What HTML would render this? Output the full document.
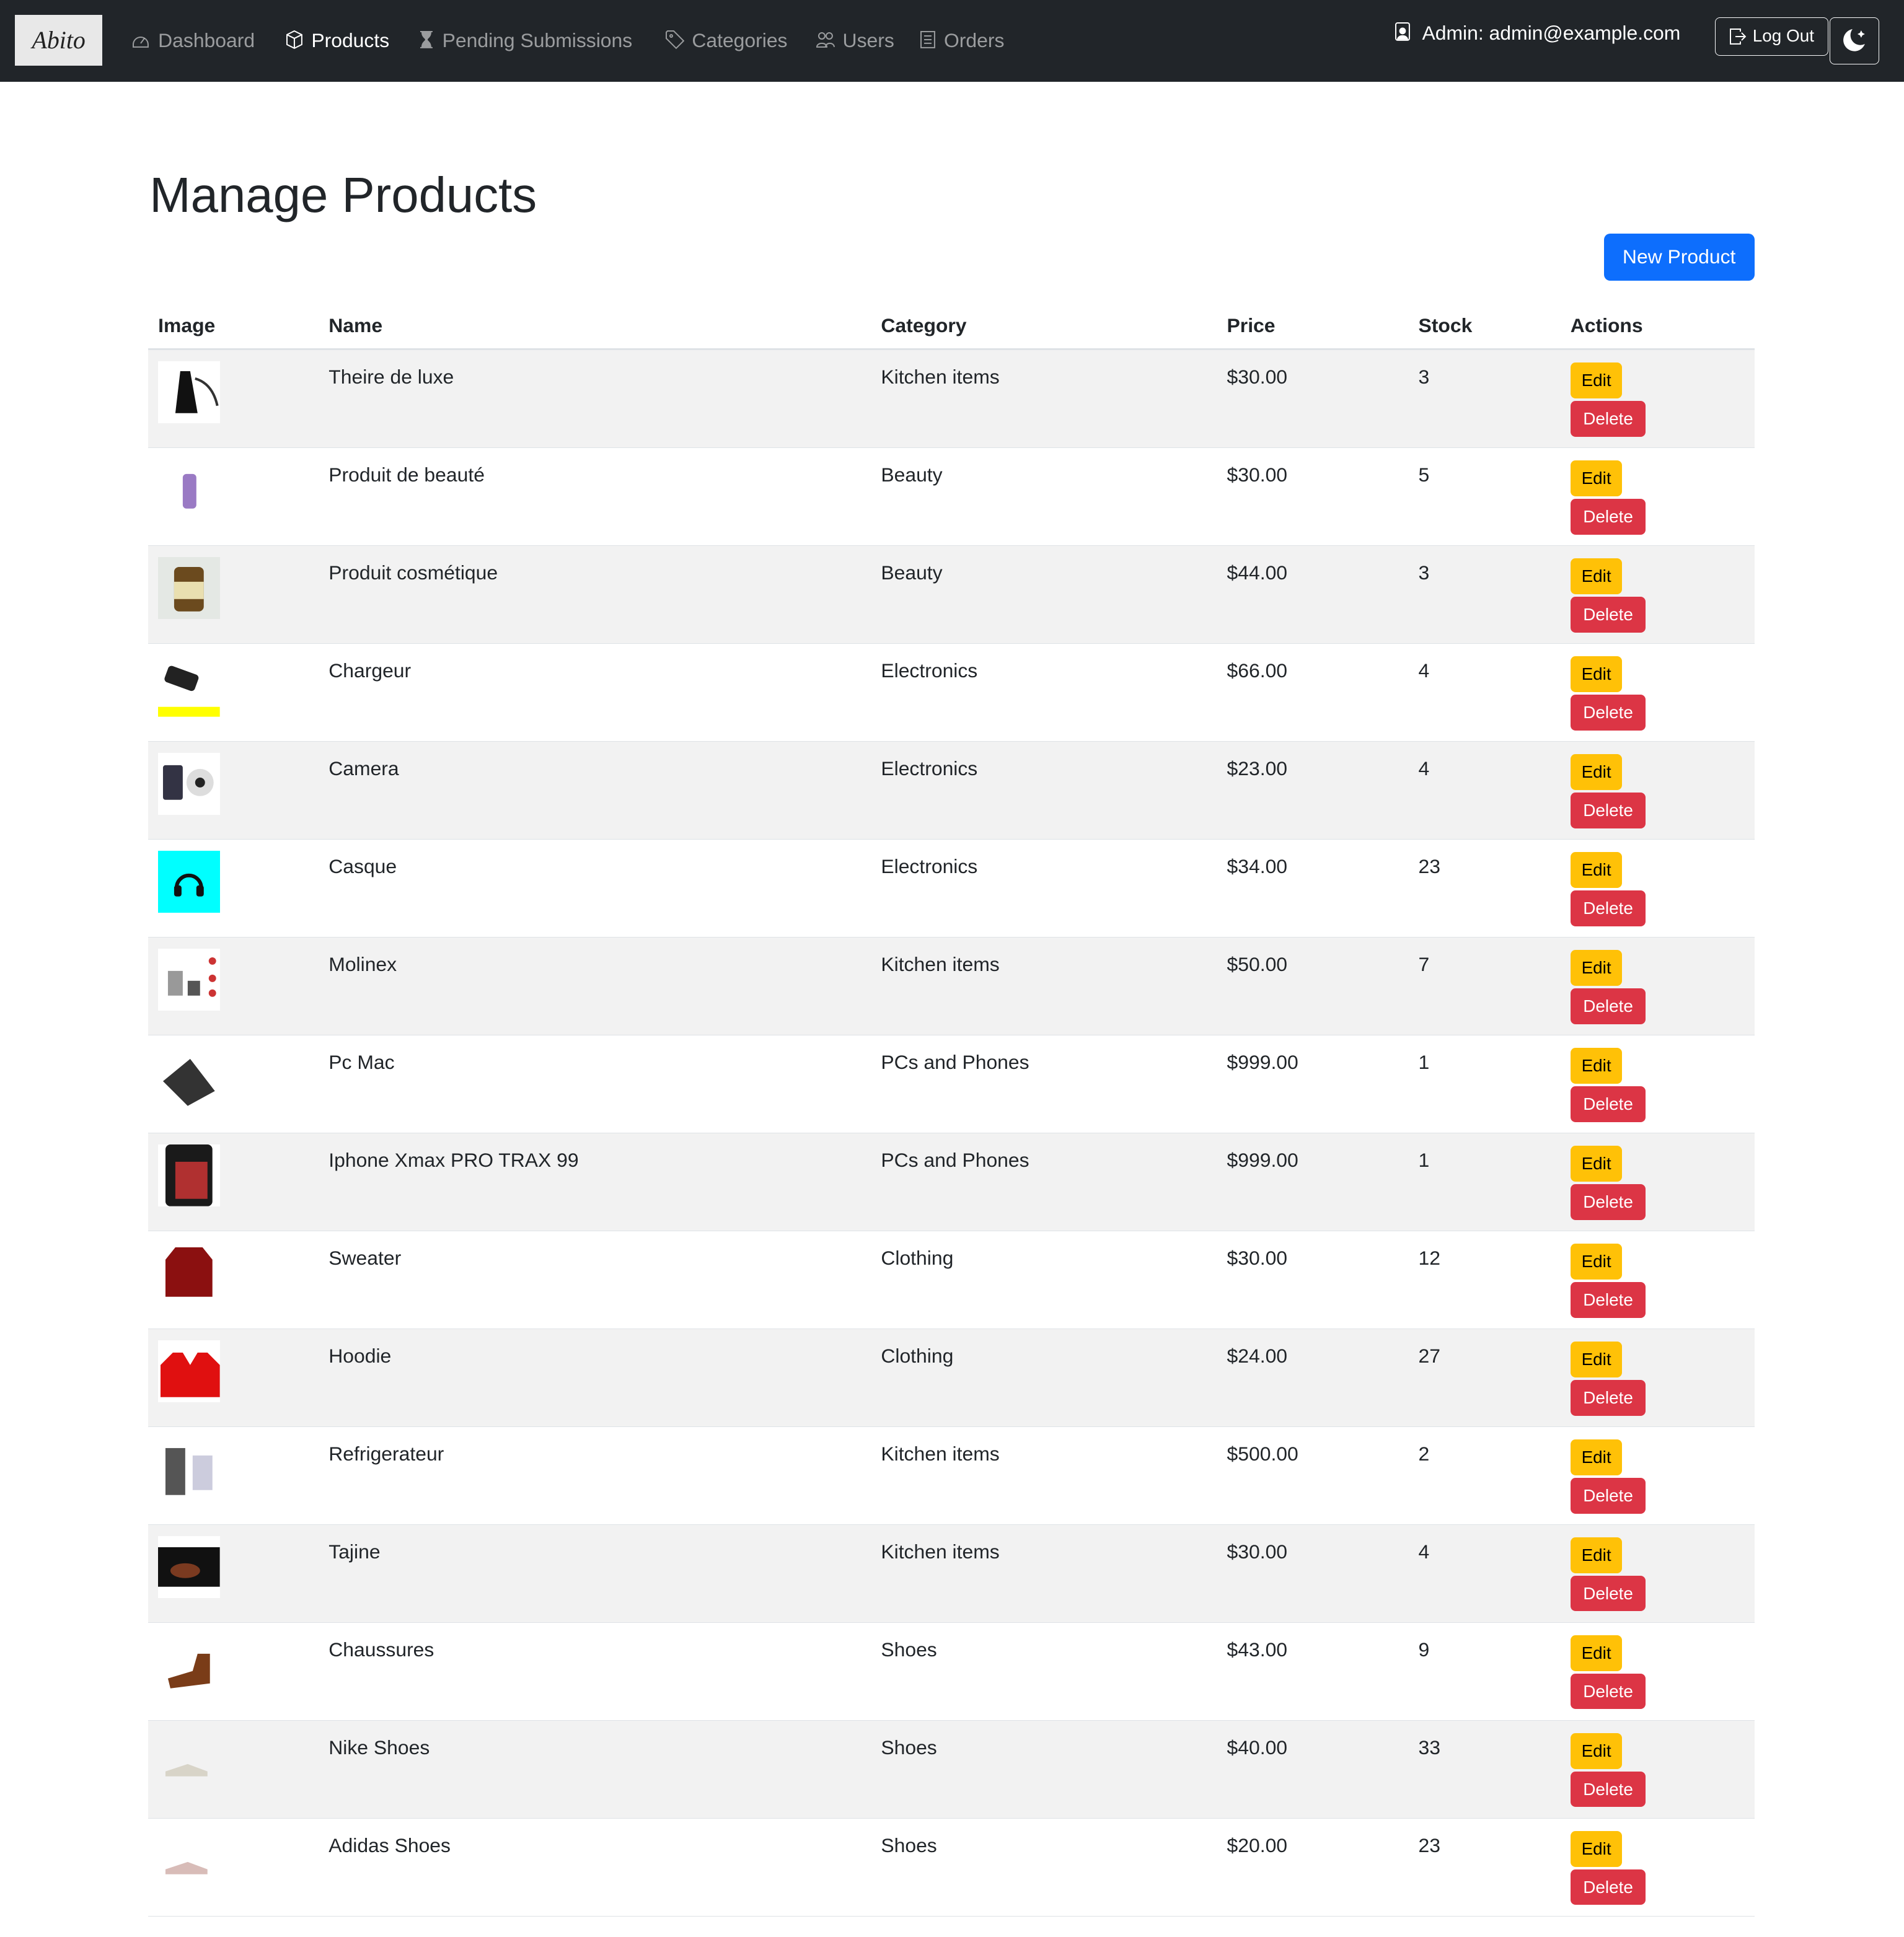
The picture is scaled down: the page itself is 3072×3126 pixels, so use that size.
<!DOCTYPE html>
<html><head><meta charset="utf-8"><style>
html{zoom:1.9935}
*{box-sizing:border-box;margin:0;padding:0}
body{width:1541px;height:1568px;background:#fff;font-family:"Liberation Sans","DejaVu Sans",sans-serif;color:#212529;overflow:hidden;position:relative}
.nav{position:absolute;left:0;top:0;width:1541px;height:66px;background:#212529}
.logo{position:absolute;left:12px;top:12px;width:71px;height:41px;background:#e8e8e8;font:italic 20px "Liberation Serif",serif;color:#222;text-align:center;line-height:41px}
.ni{position:absolute;top:22px;font-size:16px;color:rgba(255,255,255,.55);white-space:nowrap;line-height:22px}
.ni svg{vertical-align:-2px;margin-right:6px}
.act{color:#fff}
.admin{position:absolute;left:1128px;top:16px;color:#fff;font-size:16px;line-height:22px}
.lo{position:absolute;left:1388px;top:14px;width:92px;height:31px;border:1px solid #f8f9fa;border-radius:4px;color:#fff;font-size:14px;line-height:29px;padding-left:30px}
.moon{position:absolute;left:1481px;top:14px;width:40px;height:38px;border:1px solid #f8f9fa;border-radius:4px}
h1{position:absolute;left:121px;top:132px;font-size:40px;font-weight:400;line-height:52px}
.np{position:absolute;left:1298px;top:189px;width:122px;height:38px;background:#0d6efd;color:#fff;border-radius:5px;font-size:16px;text-align:center;line-height:38px}
.th{position:absolute;top:254px;font-weight:700;font-size:16px;line-height:20px}
.hl{position:absolute;left:120px;top:282px;width:1300px;height:2px;background:#dee2e6}
.row{position:absolute;left:120px;width:1300px;height:79.25px;border-bottom:1px solid #dee2e6}
.row.g{background:#f2f2f2}
.c{position:absolute;top:12px;font-size:16px;line-height:20px;white-space:nowrap}
.img{position:absolute;left:8px;top:9px;width:50px;height:50px;background:#fff}
.e{position:absolute;left:1151px;top:10px;width:42px;height:29px;background:#ffc107;border-radius:4px;font-size:14px;line-height:29px;text-align:center;color:#000}
.d{position:absolute;left:1151px;top:41px;width:61px;height:29px;background:#dc3545;border-radius:4px;font-size:14px;line-height:29px;text-align:center;color:#fff}
</style></head><body>
<div class="nav">
<div class="logo">Abito</div>
<div class="ni" style="left:106px"><svg width="16" height="16" viewBox="0 0 16 16" fill="none" stroke="currentColor"><path d="M2 12a6 6 0 1 1 12 0v2H2z"/><path d="M8 11l3-4"/></svg>Dashboard</div>
<div class="ni act" style="left:230px"><svg width="16" height="16" viewBox="0 0 16 16" fill="none" stroke="currentColor"><path d="M8 1l6 3v8l-6 3-6-3V4z"/><path d="M2 4l6 3 6-3M8 7v8"/></svg>Products</div>
<div class="ni" style="left:338px"><svg width="14" height="16" viewBox="0 0 14 16" fill="currentColor"><path d="M2 1h10v1H11c0 4-3 5-3 6s3 2 3 6h1v1H2v-1h1c0-4 3-5 3-6S3 6 3 2H2z"/></svg>Pending Submissions</div>
<div class="ni" style="left:538px"><svg width="16" height="16" viewBox="0 0 16 16" fill="none" stroke="currentColor"><path d="M1 2v5l8 8 6-6-8-8H2z"/><circle cx="5" cy="5" r="1"/></svg>Categories</div>
<div class="ni" style="left:660px"><svg width="16" height="16" viewBox="0 0 16 16" fill="none" stroke="currentColor"><circle cx="5" cy="5" r="2.5"/><circle cx="11" cy="5" r="2.5"/><path d="M1 14c0-4 8-4 8 0zM8 14c0-4 7-4 7 0"/></svg>Users</div>
<div class="ni" style="left:744px"><svg width="14" height="16" viewBox="0 0 14 16" fill="none" stroke="currentColor"><rect x="1.5" y="1.5" width="11" height="13"/><path d="M4 5h6M4 8h6M4 11h6"/></svg>Orders</div>
<div class="admin"><svg width="14" height="17" viewBox="0 0 14 17" style="vertical-align:-2px;margin-right:9px" fill="none" stroke="#fff"><rect x="1.5" y="1.5" width="11" height="14" rx="1.5"/><circle cx="7" cy="8" r="2.2" fill="#fff"/><path d="M3 15c0-4 8-4 8 0" fill="#fff"/></svg>Admin: admin@example.com</div>
<div class="lo"><svg width="14" height="14" viewBox="0 0 14 14" fill="none" stroke="#fff" style="position:absolute;left:11px;top:8px"><path d="M9 3V1H1v12h8v-2M5 7h8M10 4l3 3-3 3"/></svg>Log Out</div>
<div class="moon"><svg width="24" height="24" viewBox="0 0 24 24" style="position:absolute;left:8px;top:6px"><path d="M10 3a9 9 0 1 0 10 12A8 8 0 0 1 10 3z" fill="#fff"/><path d="M17 4l1 2 2 1-2 1-1 2-1-2-2-1 2-1z" fill="#fff"/></svg></div>
</div>
<h1>Manage Products</h1>
<div class="np">New Product</div>
<div class="th" style="left:128px">Image</div>
<div class="th" style="left:266px">Name</div>
<div class="th" style="left:713px">Category</div>
<div class="th" style="left:993px">Price</div>
<div class="th" style="left:1148px">Stock</div>
<div class="th" style="left:1271px">Actions</div>
<div class="hl"></div>

<div class="row g" style="top:283.5px"><div class="img"><svg width="50" height="50"><path d="M18 8h8l6 34H14z" fill="#111"/><path d="M30 14q14 4 18 22" stroke="#333" fill="none" stroke-width="2"/></svg></div><div class="c" style="left:146px">Theire de luxe</div><div class="c" style="left:593px">Kitchen items</div><div class="c" style="left:873px">$30.00</div><div class="c" style="left:1028px">3</div><div class="e">Edit</div><div class="d">Delete</div></div>
<div class="row" style="top:362.75px"><div class="img"><svg width="50" height="50"><rect x="20" y="12" width="11" height="28" rx="3" fill="#9a7ac4"/></svg></div><div class="c" style="left:146px">Produit de beauté</div><div class="c" style="left:593px">Beauty</div><div class="c" style="left:873px">$30.00</div><div class="c" style="left:1028px">5</div><div class="e">Edit</div><div class="d">Delete</div></div>
<div class="row g" style="top:442px"><div class="img" style="background:#e4e8e4"><svg width="50" height="50"><rect x="13" y="8" width="24" height="36" rx="4" fill="#6b4a1e"/><rect x="13" y="20" width="24" height="14" fill="#e9dfb0"/></svg></div><div class="c" style="left:146px">Produit cosmétique</div><div class="c" style="left:593px">Beauty</div><div class="c" style="left:873px">$44.00</div><div class="c" style="left:1028px">3</div><div class="e">Edit</div><div class="d">Delete</div></div>
<div class="row" style="top:521.25px"><div class="img"><svg width="50" height="50"><rect x="6" y="12" width="26" height="14" rx="3" fill="#222" transform="rotate(20 19 19)"/><rect x="0" y="42" width="50" height="8" fill="#ff0"/></svg></div><div class="c" style="left:146px">Chargeur</div><div class="c" style="left:593px">Electronics</div><div class="c" style="left:873px">$66.00</div><div class="c" style="left:1028px">4</div><div class="e">Edit</div><div class="d">Delete</div></div>
<div class="row g" style="top:600.5px"><div class="img"><svg width="50" height="50"><rect x="4" y="10" width="16" height="28" rx="2" fill="#334"/><circle cx="34" cy="24" r="11" fill="#ddd"/><circle cx="34" cy="24" r="4" fill="#222"/></svg></div><div class="c" style="left:146px">Camera</div><div class="c" style="left:593px">Electronics</div><div class="c" style="left:873px">$23.00</div><div class="c" style="left:1028px">4</div><div class="e">Edit</div><div class="d">Delete</div></div>
<div class="row" style="top:679.75px"><div class="img" style="background:#0ff"><svg width="50" height="50"><path d="M15 30a10 10 0 0 1 20 0" stroke="#111" stroke-width="3" fill="none"/><rect x="13" y="28" width="6" height="9" rx="2" fill="#111"/><rect x="31" y="28" width="6" height="9" rx="2" fill="#111"/></svg></div><div class="c" style="left:146px">Casque</div><div class="c" style="left:593px">Electronics</div><div class="c" style="left:873px">$34.00</div><div class="c" style="left:1028px">23</div><div class="e">Edit</div><div class="d">Delete</div></div>
<div class="row g" style="top:759px"><div class="img"><svg width="50" height="50"><rect x="8" y="18" width="12" height="20" fill="#999"/><rect x="24" y="26" width="10" height="12" fill="#555"/><circle cx="44" cy="10" r="3" fill="#c33"/><circle cx="44" cy="24" r="3" fill="#c33"/><circle cx="44" cy="36" r="3" fill="#c33"/></svg></div><div class="c" style="left:146px">Molinex</div><div class="c" style="left:593px">Kitchen items</div><div class="c" style="left:873px">$50.00</div><div class="c" style="left:1028px">7</div><div class="e">Edit</div><div class="d">Delete</div></div>
<div class="row" style="top:838.25px"><div class="img"><svg width="50" height="50"><path d="M4 28l22-18 20 26-22 12z" fill="#333"/></svg></div><div class="c" style="left:146px">Pc Mac</div><div class="c" style="left:593px">PCs and Phones</div><div class="c" style="left:873px">$999.00</div><div class="c" style="left:1028px">1</div><div class="e">Edit</div><div class="d">Delete</div></div>
<div class="row g" style="top:917.5px"><div class="img"><svg width="50" height="50"><rect x="6" y="0" width="38" height="50" rx="4" fill="#1a1a1a"/><rect x="14" y="14" width="26" height="30" fill="#b03030"/></svg></div><div class="c" style="left:146px">Iphone Xmax PRO TRAX 99</div><div class="c" style="left:593px">PCs and Phones</div><div class="c" style="left:873px">$999.00</div><div class="c" style="left:1028px">1</div><div class="e">Edit</div><div class="d">Delete</div></div>
<div class="row" style="top:996.75px"><div class="img"><svg width="50" height="50"><path d="M14 4h22l8 10v30H6V14z" fill="#8b1010"/></svg></div><div class="c" style="left:146px">Sweater</div><div class="c" style="left:593px">Clothing</div><div class="c" style="left:873px">$30.00</div><div class="c" style="left:1028px">12</div><div class="e">Edit</div><div class="d">Delete</div></div>
<div class="row g" style="top:1076px"><div class="img"><svg width="50" height="50"><path d="M2 46V20l10-10h8l6 10 6-10h8l10 10v26z" fill="#e01010"/></svg></div><div class="c" style="left:146px">Hoodie</div><div class="c" style="left:593px">Clothing</div><div class="c" style="left:873px">$24.00</div><div class="c" style="left:1028px">27</div><div class="e">Edit</div><div class="d">Delete</div></div>
<div class="row" style="top:1155.25px"><div class="img"><svg width="50" height="50"><rect x="6" y="8" width="16" height="38" fill="#555"/><rect x="28" y="14" width="16" height="28" fill="#ccd"/></svg></div><div class="c" style="left:146px">Refrigerateur</div><div class="c" style="left:593px">Kitchen items</div><div class="c" style="left:873px">$500.00</div><div class="c" style="left:1028px">2</div><div class="e">Edit</div><div class="d">Delete</div></div>
<div class="row g" style="top:1234.5px"><div class="img"><svg width="50" height="50"><rect x="0" y="9" width="50" height="32" fill="#111"/><ellipse cx="22" cy="28" rx="12" ry="6" fill="#7a3a20"/></svg></div><div class="c" style="left:146px">Tajine</div><div class="c" style="left:593px">Kitchen items</div><div class="c" style="left:873px">$30.00</div><div class="c" style="left:1028px">4</div><div class="e">Edit</div><div class="d">Delete</div></div>
<div class="row" style="top:1313.75px"><div class="img"><svg width="50" height="50"><path d="M8 36l20-6 4-14h10v24L10 44z" fill="#7a3c18"/></svg></div><div class="c" style="left:146px">Chaussures</div><div class="c" style="left:593px">Shoes</div><div class="c" style="left:873px">$43.00</div><div class="c" style="left:1028px">9</div><div class="e">Edit</div><div class="d">Delete</div></div>
<div class="row g" style="top:1393px"><div class="img" style="background:transparent"><svg width="50" height="50"><path d="M6 32l18-6 16 6v4H6z" fill="#d8d4c8"/></svg></div><div class="c" style="left:146px">Nike Shoes</div><div class="c" style="left:593px">Shoes</div><div class="c" style="left:873px">$40.00</div><div class="c" style="left:1028px">33</div><div class="e">Edit</div><div class="d">Delete</div></div>
<div class="row" style="top:1472.25px"><div class="img"><svg width="50" height="50"><path d="M6 32l18-6 16 6v4H6z" fill="#d8bcb8"/></svg></div><div class="c" style="left:146px">Adidas Shoes</div><div class="c" style="left:593px">Shoes</div><div class="c" style="left:873px">$20.00</div><div class="c" style="left:1028px">23</div><div class="e">Edit</div><div class="d">Delete</div></div>
</body></html>
